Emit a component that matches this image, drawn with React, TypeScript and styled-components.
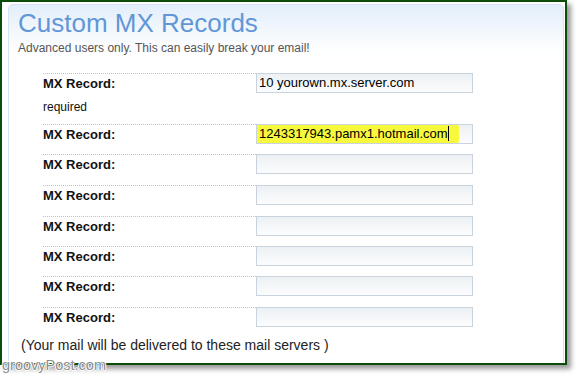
import React from 'react';
import styled, { createGlobalStyle } from 'styled-components';

const GlobalStyle = createGlobalStyle`
  html, body {
    margin: 0;
    padding: 0;
    background: #ffffff;
  }
  body {
    font-family: "Liberation Sans", Arial, sans-serif;
    width: 577px;
    height: 375px;
    overflow: hidden;
  }
`;

const Page = styled.div`
  position: relative;
  width: 577px;
  height: 375px;
`;

const Frame = styled.div`
  box-sizing: border-box;
  width: 567px;
  height: 365px;
  border: 2px solid #0b4c0b;
  background: #ffffff;
  box-shadow: 4px 4px 5px rgba(0, 0, 0, 0.4);
  display: flex;
  flex-direction: column;
`;

const Panel = styled.div`
  flex: 1;
  margin: 2px 1px 0 6px;
  padding: 3px 0 0 9px;
  border: 1px solid #d6e4f1;
  border-bottom: none;
  border-radius: 5px 5px 0 0;
  background: linear-gradient(to bottom, #e2eefb 0px, #f4f8fd 28px, #ffffff 48px);
`;

const Title = styled.h1`
  margin: 0;
  font-size: 26px;
  line-height: 30px;
  font-weight: normal;
  color: #6197d7;
`;

const Subtitle = styled.div`
  margin-top: 3px;
  font-size: 12px;
  line-height: 14px;
  color: #555555;
`;

const Records = styled.div`
  margin: 18px 0 0 25px;
  display: flex;
  flex-direction: column;
`;

const Row = styled.div<{ $h: number }>`
  display: flex;
  height: ${(p) => p.$h}px;
`;

const LabelCell = styled.div`
  width: 213px;
  border-top: 1px dotted #c2c2c2;
  box-sizing: border-box;
`;

const Label = styled.div`
  margin-top: -1px;
  font-size: 13px;
  line-height: 22px;
  font-weight: bold;
  color: #111111;
`;

const Note = styled.div`
  margin-top: 5px;
  font-size: 12px;
  line-height: 14px;
  color: #111111;
`;

const Field = styled.div`
  box-sizing: border-box;
  width: 217px;
  height: 20px;
  border: 1px solid #c9d3dd;
  background: linear-gradient(to bottom, #edf1f4, #fbfcfd);
  font-size: 13px;
  line-height: 18px;
  color: #000000;
  padding-left: 2px;
  white-space: nowrap;
  overflow: hidden;
`;

const Marked = styled.span`
  display: inline-block;
  margin-left: -3px;
  padding: 0 10px 0 3px;
  height: 18px;
  background: #f8f83c;
  border-radius: 2px;
`;

const Caret = styled.span`
  display: inline-block;
  width: 1px;
  height: 15px;
  background: #000000;
  vertical-align: -3px;
`;

const Footer = styled.div`
  padding-left: 3px;
  font-size: 14px;
  line-height: 16px;
  color: #222222;
`;

const Watermark = styled.div`
  position: absolute;
  left: 2px;
  top: 357px;
  font-size: 14.5px;
  line-height: 16px;
  color: #8e8e8e;
  text-shadow: 1px 0 0 #fff, -1px 0 0 #fff, 0 1px 0 #fff, 0 -1px 0 #fff;
`;

const heights = [51, 30, 31, 31, 30, 30, 31, 30];

export default function App() {
  return (
    <>
      <GlobalStyle />
      <Page>
        <Frame>
          <Panel>
            <Title>Custom MX Records</Title>
            <Subtitle>Advanced users only. This can easily break your email!</Subtitle>
            <Records>
              {heights.map((h, i) => (
                <Row key={i} $h={h}>
                  <LabelCell>
                    <Label>MX Record:</Label>
                    {i === 0 && <Note>required</Note>}
                  </LabelCell>
                  <Field>
                    {i === 0 && '10 yourown.mx.server.com'}
                    {i === 1 && (
                      <Marked>
                        1243317943.pamx1.hotmail.com
                        <Caret />
                      </Marked>
                    )}
                  </Field>
                </Row>
              ))}
            </Records>
            <Footer>(Your mail will be delivered to these mail servers )</Footer>
          </Panel>
        </Frame>
        <Watermark>groovyPost.com</Watermark>
      </Page>
    </>
  );
}
